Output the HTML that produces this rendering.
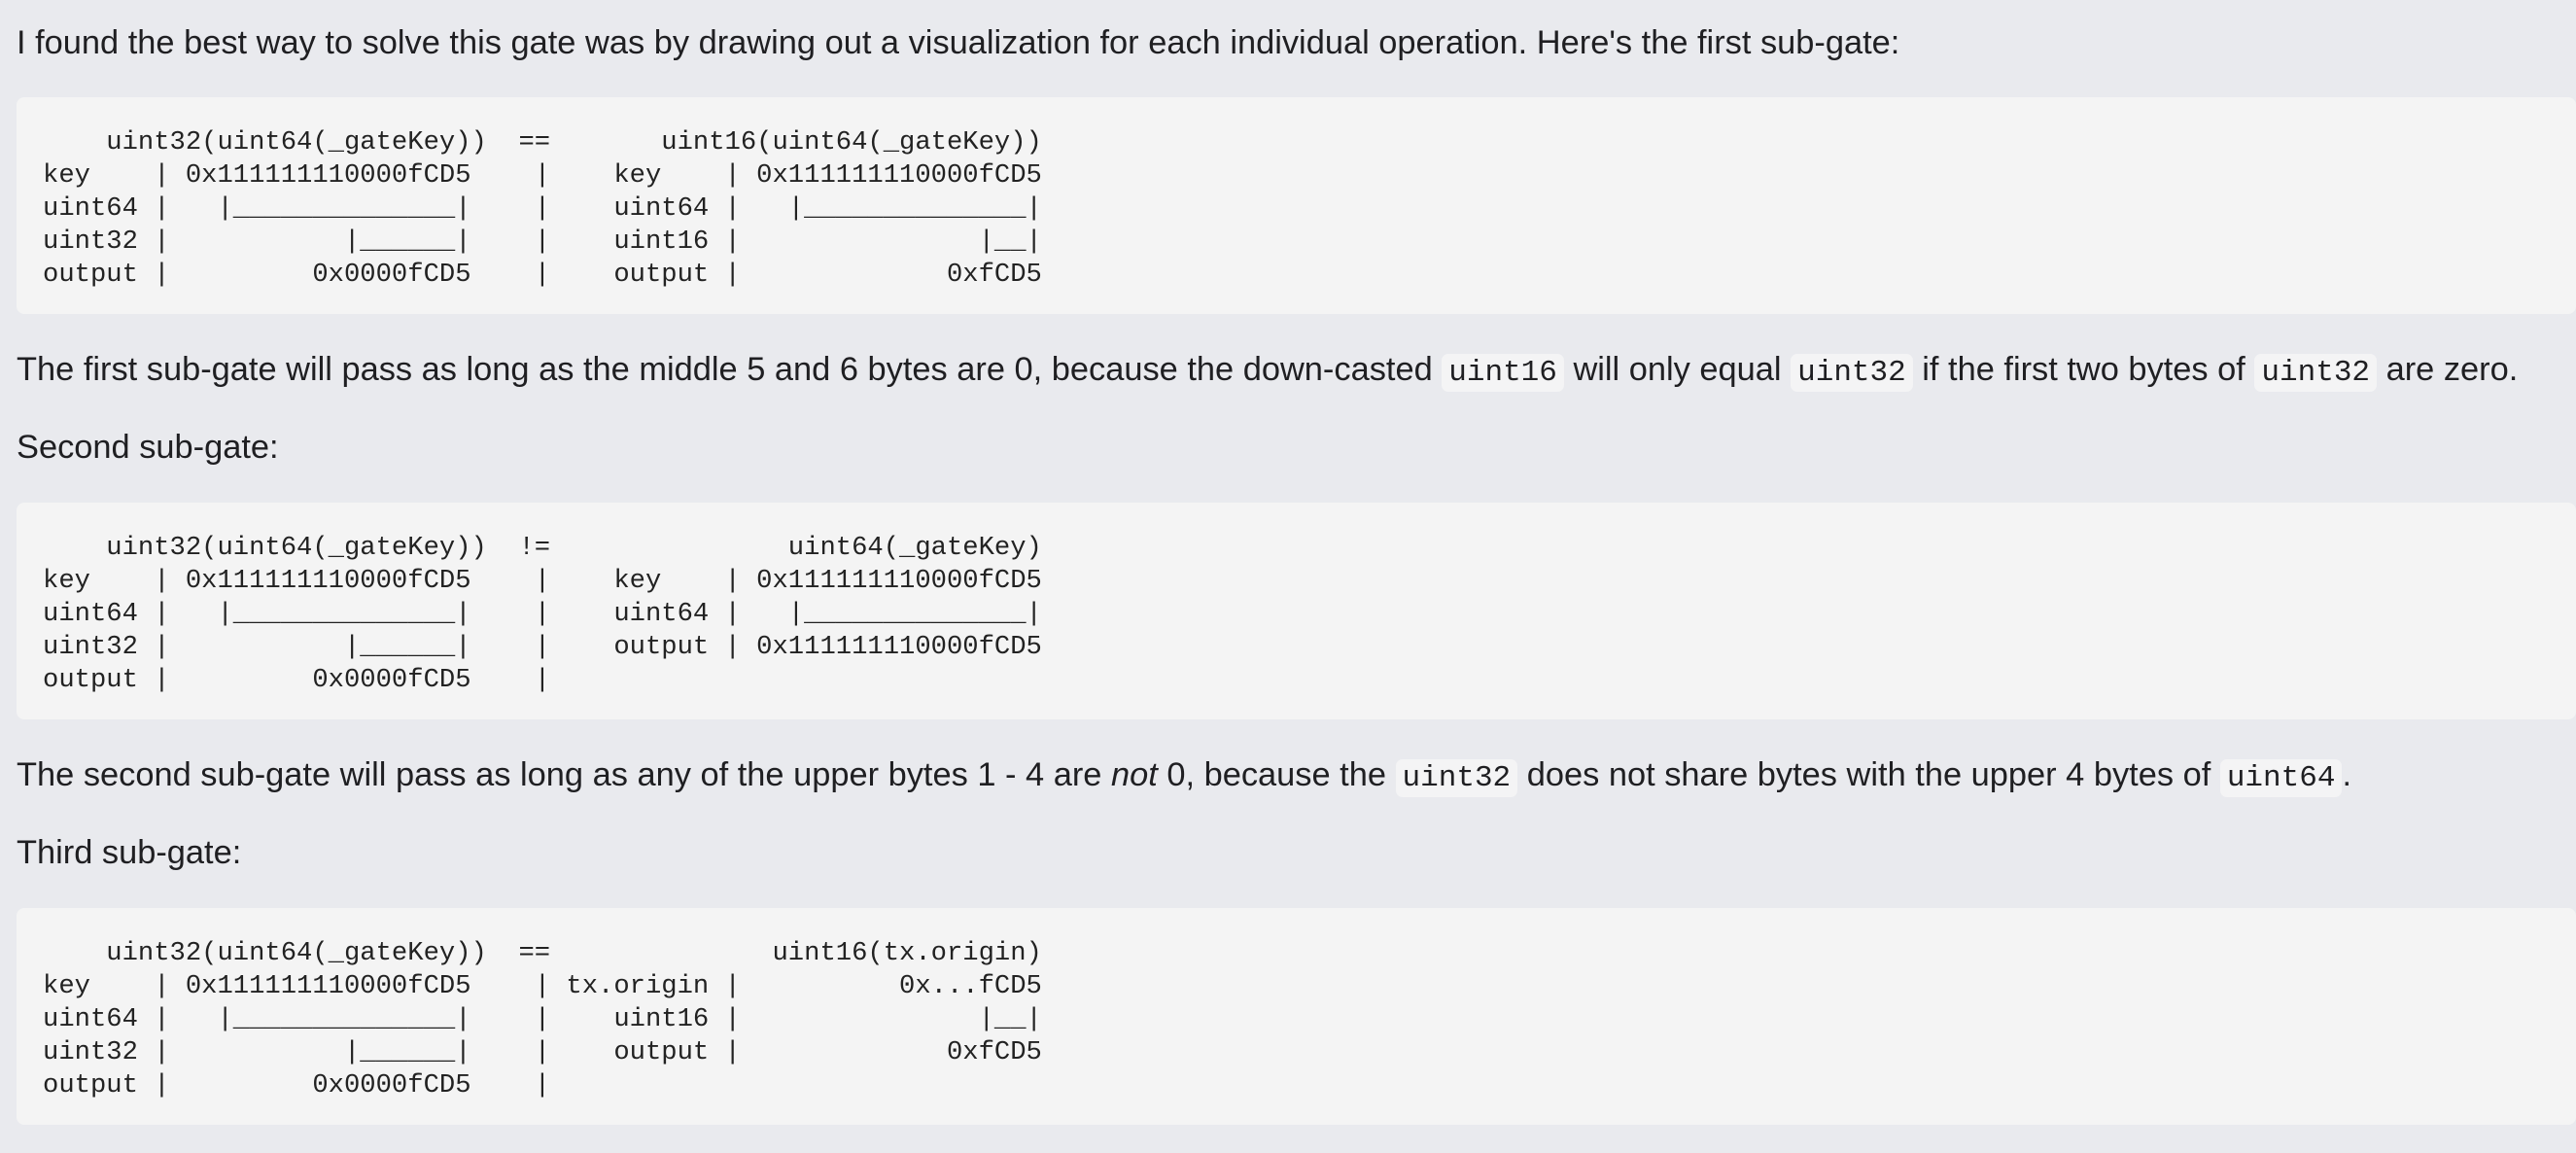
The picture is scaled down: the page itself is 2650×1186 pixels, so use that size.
<!DOCTYPE html>
<html><head><meta charset="utf-8"><style>
html,body{margin:0;padding:0;}
body{width:2650px;height:1186px;background:#e9eaee;font-family:"Liberation Sans",sans-serif;font-size:34.4px;color:#1f1f22;overflow:hidden;}
.wrap{padding:20px 0 0 17px;}
p{margin:0;line-height:48px;height:48px;}
pre{margin:0;background:#f4f4f4;border-radius:8px;padding:30px 27px 23px 27px;font-family:"Liberation Mono",monospace;font-size:27.2px;line-height:34px;color:#222;white-space:pre;}
code{font-family:"Liberation Mono",monospace;font-size:31px;background:#f4f4f5;border-radius:7px;padding:2px 7px;}
.g1{margin-top:33px;}
</style></head><body><div class="wrap">
<p>I found the best way to solve this gate was by drawing out a visualization for each individual operation. Here's the first sub-gate:</p>
<pre style="margin-top:32px">    uint32(uint64(_gateKey))  ==       uint16(uint64(_gateKey))
key    | 0x111111110000fCD5    |    key    | 0x111111110000fCD5
uint64 |   |______________|    |    uint64 |   |______________|
uint32 |           |______|    |    uint16 |               |__|
output |         0x0000fCD5    |    output |             0xfCD5</pre>
<p class="g1">The first sub-gate will pass as long as the middle 5 and 6 bytes are 0, because the down-casted <code>uint16</code> will only equal <code>uint32</code> if the first two bytes of <code>uint32</code> are zero.</p>
<p style="margin-top:32px">Second sub-gate:</p>
<pre style="margin-top:33px">    uint32(uint64(_gateKey))  !=               uint64(_gateKey)
key    | 0x111111110000fCD5    |    key    | 0x111111110000fCD5
uint64 |   |______________|    |    uint64 |   |______________|
uint32 |           |______|    |    output | 0x111111110000fCD5
output |         0x0000fCD5    |</pre>
<p class="g1">The second sub-gate will pass as long as any of the upper bytes 1 - 4 are <i>not</i> 0, because the <code>uint32</code> does not share bytes with the upper 4 bytes of <code>uint64</code>.</p>
<p style="margin-top:32px">Third sub-gate:</p>
<pre style="margin-top:33px">    uint32(uint64(_gateKey))  ==              uint16(tx.origin)
key    | 0x111111110000fCD5    | tx.origin |          0x...fCD5
uint64 |   |______________|    |    uint16 |               |__|
uint32 |           |______|    |    output |             0xfCD5
output |         0x0000fCD5    |</pre>
</div></body></html>
